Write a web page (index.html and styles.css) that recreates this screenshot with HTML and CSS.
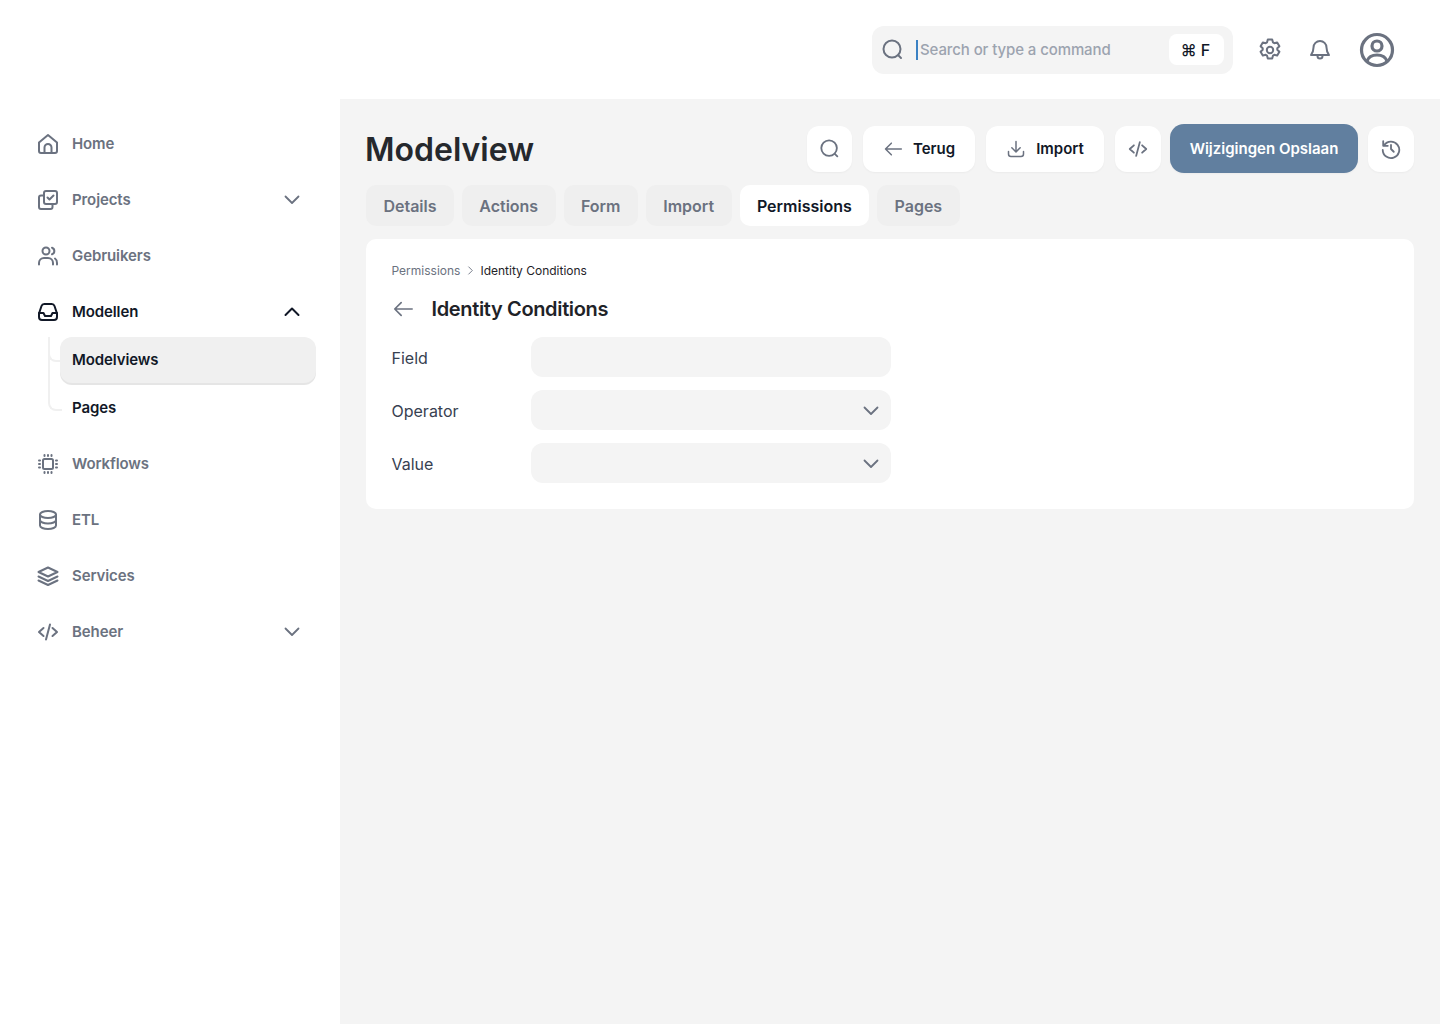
FILE: index.html
```html
<!DOCTYPE html>
<html lang="nl">
<head>
    <meta charset="UTF-8">
    <meta name="viewport" content="width=device-width, initial-scale=1.0">
    <title>Modelview</title>
    <link rel="stylesheet" href="styles.css">
</head>
<body>

    <!-- Topbar -->
    <header class="topbar">
        <div class="search">
            <svg class="icon-search" viewBox="0 0 24 24"><circle cx="11" cy="11" r="8.5"/><path d="M17.5 17.500 20 20"/></svg>
            <span class="caret"></span>
            <span class="search-text">Search or type a command</span>
            <span class="kbd">⌘ F</span>
        </div>
        <svg class="top-icon gear" viewBox="0 0 24 24"><path d="M9.800 1.500h4.400l.8 2.900 1.300.8 2.900-.8 2.200 3.800-2.100 2.100v1.400l2.100 2.100-2.200 3.800-2.900-.8-1.300.8-.8 2.900H9.800l-.8-2.900-1.300-.8-2.900.8-2.200-3.800 2.100-2.100v-1.400L2.600 8.200l2.200-3.800 2.900.8 1.300-.8z"/><circle cx="12" cy="12" r="3.200"/></svg>
        <svg class="top-icon bell" viewBox="0 0 24 24"><path d="M5.500 9.500a6.500 6.500 0 0 1 13 0c0 3.500 1 5.500 2.500 7.500H3c1.500-2 2.500-4 2.500-7.500z"/><path d="M9.500 17v1a2.500 2.500 0 0 0 5 0v-1"/></svg>
        <svg class="avatar" viewBox="0 0 36 36"><circle cx="18" cy="18" r="15.500"/><circle cx="18" cy="14" r="5"/><path d="M8 29c1.500-4 5-6 10-6s8.500 2 10 6"/></svg>
    </header>

    <div class="layout">
        <!-- Sidebar -->
        <nav class="sidebar">
            <a class="nav-item">
                <svg class="nav-icon" viewBox="0 0 24 24"><path d="M3 10.500 12 3l9 7.500V19a2 2 0 0 1-2 2H5a2 2 0 0 1-2-2z"/><path d="M8.500 21v-5.500a3.500 3.500 0 0 1 7 0V21"/></svg>
                Home
            </a>
            <a class="nav-item">
                <svg class="nav-icon" viewBox="0 0 24 24"><rect x="8" y="3" width="13" height="13" rx="2"/><path d="M8 7.500H5a2 2 0 0 0-2 2V19a2 2 0 0 0 2 2h9.500a2 2 0 0 0 2-2v-3"/><path d="m11.500 9.500 2 2 4-4"/></svg>
                Projects
                <svg class="chevron" viewBox="0 0 16 16"><path d="m1.500 4.500 6.500 6.500 6.500-6.500"/></svg>
            </a>
            <a class="nav-item">
                <svg class="nav-icon" viewBox="0 0 24 24"><circle cx="10" cy="7" r="3.500"/><path d="M3 20.500V19a5 5 0 0 1 5-5h4a5 5 0 0 1 5 5v1.500"/><path d="M16 3.700a3.500 3.500 0 0 1 0 6.600"/><path d="M19 14.500a5 5 0 0 1 2 4.500v1.500"/></svg>
                Gebruikers
            </a>
            <a class="nav-item active">
                <svg class="nav-icon" viewBox="0 0 24 24"><path d="M3 13.500 5.500 6A3 3 0 0 1 8.300 4h7.400a3 3 0 0 1 2.800 2l2.500 7.500V17a3 3 0 0 1-3 3H6a3 3 0 0 1-3-3z"/><path d="M3 13h4.500l1.500 3h6l1.500-3H21"/></svg>
                Modellen
                <svg class="chevron" viewBox="0 0 16 16"><path d="m1.500 11 6.500-6.500 6.500 6.500"/></svg>
            </a>
            <div class="subnav">
                <a class="sub-item selected">Modelviews</a>
                <a class="sub-item">Pages</a>
            </div>
            <a class="nav-item">
                <svg class="nav-icon" viewBox="0 0 24 24"><rect x="7" y="7" width="10" height="10" rx="1.500"/><path d="M8.500 3v1M12 3v1M15.500 3v1M8.500 20v1M12 20v1M15.500 20v1M3 8.500h1M3 12h1M3 15.500h1M20 8.500h1M20 12h1M20 15.500h1"/></svg>
                Workflows
            </a>
            <a class="nav-item">
                <svg class="nav-icon" viewBox="0 0 24 24"><ellipse cx="12" cy="6.500" rx="8" ry="3.500"/><path d="M4 6.500v11c0 2 3.600 3.500 8 3.500s8-1.500 8-3.500v-11"/><path d="M4 12c0 2 3.600 3.500 8 3.500s8-1.500 8-3.500"/></svg>
                ETL
            </a>
            <a class="nav-item">
                <svg class="nav-icon" viewBox="0 0 24 24"><path d="M12 3.500 21.500 8 12 12.500 2.500 8z"/><path d="m2.500 12.500 9.500 4.500 9.500-4.500"/><path d="m2.500 16.500 9.500 4.500 9.500-4.500"/></svg>
                Services
            </a>
            <a class="nav-item">
                <svg class="nav-icon" viewBox="0 0 24 24"><path d="m7.500 8-4.500 4 4.500 4M16.500 8l4.500 4-4.500 4M14 4.500l-4 15"/></svg>
                Beheer
                <svg class="chevron" viewBox="0 0 16 16"><path d="m1.500 4.500 6.500 6.500 6.500-6.500"/></svg>
            </a>
        </nav>

        <!-- Content -->
        <main class="content">
            <div class="page-head">
                <h1>Modelview</h1>
                <div class="actions">
                    <button class="btn btn-icon btn-first"><svg viewBox="0 0 24 24"><circle cx="11" cy="11" r="8.500"/><path d="M17.500 17.500 20 20"/></svg></button>
                    <button class="btn btn-back"><svg viewBox="0 0 24 24"><path d="M22 12H3M10 5l-7 7 7 7"/></svg>Terug</button>
                    <button class="btn btn-import"><svg viewBox="0 0 24 24"><path d="M12 3v12M7 10.500l5 5 5-5M3 15v3a3 3 0 0 0 3 3h12a3 3 0 0 0 3-3v-3"/></svg>Import</button>
                    <button class="btn btn-icon"><svg viewBox="0 0 24 24"><path d="m7.500 8-4.500 4 4.500 4M16.500 8l4.500 4-4.500 4M14 4.500l-4 15"/></svg></button>
                    <button class="btn btn-primary">Wijzigingen Opslaan</button>
                    <button class="btn btn-icon"><svg viewBox="0 0 24 24"><path d="M4.500 8A9 9 0 1 1 3 13"/><path d="M3.500 3.500V8.500H8.500"/><path d="M12 7.500V12l3 3"/></svg></button>
                </div>
            </div>

            <div class="tabs">
                <a class="tab">Details</a>
                <a class="tab">Actions</a>
                <a class="tab">Form</a>
                <a class="tab">Import</a>
                <a class="tab current">Permissions</a>
                <a class="tab">Pages</a>
            </div>

            <section class="card">
                <div class="breadcrumb">
                    <span class="crumb-parent">Permissions</span>
                    <svg viewBox="0 0 10 10"><path d="m3 1 4 4-4 4"/></svg>
                    <span>Identity Conditions</span>
                </div>
                <div class="card-title">
                    <svg viewBox="0 0 24 24"><path d="M22 12H3M10 5l-7 7 7 7"/></svg>
                    <h2>Identity Conditions</h2>
                </div>
                <div class="form-row">
                    <label>Field</label>
                    <div class="field"></div>
                </div>
                <div class="form-row">
                    <label>Operator</label>
                    <div class="field"><svg viewBox="0 0 16 16"><path d="m1.500 4.500 6.500 6.500 6.500-6.500"/></svg></div>
                </div>
                <div class="form-row">
                    <label>Value</label>
                    <div class="field"><svg viewBox="0 0 16 16"><path d="m1.500 4.500 6.500 6.500 6.500-6.500"/></svg></div>
                </div>
            </section>
        </main>
    </div>

</body>
</html>
```

FILE: styles.css
```css
* {
    box-sizing: border-box;
}
body {
    margin: 0;
    font-family: Inter, "Liberation Sans", sans-serif;
    color: #111827;
    background-color: #fff;
}
svg {
    fill: none;
    stroke: #6b7280;
    stroke-width: 1.8;
    stroke-linecap: round;
    stroke-linejoin: round;
    flex-shrink: 0;
}

/* topbar */
.topbar {
    height: 99px;
    display: flex;
    align-items: center;
    justify-content: flex-end;
    padding-right: 45px;
}
.search {
    width: 361px;
    height: 48px;
    margin-right: 25px;
    padding: 0 9px 0 9px;
    display: flex;
    align-items: center;
    background-color: #f4f4f4;
    border-radius: 12px;
}
.icon-search {
    width: 24px;
    height: 24px;
    stroke-width: 2;
}
.caret {
    width: 2px;
    height: 20px;
    margin-left: 11px;
    background-color: #3b82c4;
}
.search-text {
    margin-left: 2px;
    font-size: 15px;
    font-weight: 500;
    letter-spacing: -0.1px;
    color: #9ca3af;
}
.kbd {
    margin-left: auto;
    width: 55px;
    height: 31px;
    padding-right: 2px;
    display: flex;
    align-items: center;
    justify-content: center;
    background-color: #fff;
    border-radius: 8px;
    font-size: 16px;
    font-weight: 500;
    color: #111827;
}
.top-icon {
    width: 24px;
    height: 24px;
    stroke-width: 2;
}
.gear {
    margin-right: 26px;
}
.avatar {
    width: 36px;
    height: 36px;
    margin-left: 27px;
    stroke-width: 3.2;
}

/* sidebar */
.layout {
    display: flex;
    min-height: 925px;
}
.sidebar {
    width: 340px;
    flex-shrink: 0;
    padding: 17px 24px 0 36px;
}
.nav-item {
    height: 56px;
    padding-bottom: 1px;
    display: flex;
    align-items: center;
    font-size: 15px;
    font-weight: 600;
    letter-spacing: -0.1px;
    color: #6b7280;
}
.nav-icon {
    width: 24px;
    height: 24px;
    margin-right: 12px;
    stroke-width: 2;
}
.chevron {
    width: 16px;
    height: 16px;
    margin-left: auto;
    transform: translateX(-16px);
    stroke-width: 1.8;
}
.active {
    color: #111827;
}
.active svg {
    stroke: #111827;
    stroke-width: 2;
}
.subnav {
    margin-top: -4px;
    margin-bottom: 4px;
    padding-left: 24px;
    position: relative;
}
.subnav::before {
    content: "";
    position: absolute;
    left: 12px;
    top: 0;
    width: 12px;
    height: 72px;
    border-left: 2px solid #f0f0f0;
    border-bottom: 2px solid #f0f0f0;
    border-bottom-left-radius: 8px;
}
.sub-item {
    height: 48px;
    display: flex;
    align-items: center;
    padding-left: 12px;
    padding-bottom: 1px;
    font-size: 15px;
    font-weight: 600;
    letter-spacing: -0.1px;
    color: #111827;
}
.selected {
    position: relative;
    background-color: #f0f0f0;
    border-radius: 12px;
    box-shadow: 0 2px 0 #e5e5e5;
    height: 46px;
    margin-top: 1px;
    margin-bottom: 1px;
}
.selected::before {
    content: "";
    position: absolute;
    left: -12px;
    top: 11px;
    width: 12px;
    height: 12px;
    border-left: 2px solid #f0f0f0;
    border-bottom: 2px solid #f0f0f0;
    border-bottom-left-radius: 8px;
}

/* main */
.content {
    flex: 1;
    padding: 25px 26px 26px;
    background-color: #f4f4f4;
}
.page-head {
    display: flex;
    align-items: center;
    justify-content: space-between;
    height: 49px;
}
h1 {
    margin: 2px 0 0 -1px;
    font-size: 32px;
    font-weight: 600;
    color: #25282d;
}
.actions {
    display: flex;
    align-items: center;
    gap: 11px;
}
.btn {
    height: 46px;
    display: flex;
    align-items: center;
    justify-content: center;
    gap: 10px;
    padding: 0;
    border: none;
    border-radius: 12px;
    background-color: #fff;
    box-shadow: 0 1px 2px rgba(0, 0, 0, 0.04);
    font-family: inherit;
    font-size: 15px;
    font-weight: 600;
    color: #111827;
}
.btn svg {
    width: 20px;
    height: 20px;
}
.btn-icon {
    width: 46px;
}
.btn-first {
    width: 45px;
}
.btn-icon svg {
    width: 22px;
    height: 22px;
    stroke-width: 2;
}
.btn-back {
    width: 112px;
}
.btn-import {
    width: 118px;
}
.btn-primary {
    width: 188px;
    height: 49px;
    margin: 0 -1px 0 -2px;
    background-color: #617f9f;
    color: #fff;
    border-radius: 14px;
}
.tabs {
    display: flex;
    gap: 8px;
    margin-top: 12px;
}
.tab {
    height: 41px;
    display: flex;
    align-items: center;
    padding: 0 17.4px;
    background-color: #efefef;
    border-radius: 10px;
    font-size: 16px;
    font-weight: 600;
    color: #6b7280;
}
.current {
    background-color: #fff;
    color: #111827;
}
.card {
    margin-top: 13px;
    padding: 22px 26px 26px 25.5px;
    background-color: #fff;
    border-radius: 10px;
}
.breadcrumb {
    display: flex;
    align-items: center;
    gap: 5.5px;
    height: 18px;
    font-size: 12px;
    color: #1f2328;
}
.breadcrumb svg {
    width: 9px;
    height: 9px;
    stroke-width: 1;
}
.crumb-parent {
    color: #6b7280;
}
.card-title {
    display: flex;
    align-items: center;
    gap: 18px;
    margin-top: 18px;
    height: 24px;
}
.card-title svg {
    width: 22px;
    height: 22px;
}
h2 {
    margin: 0;
    font-size: 20px;
    font-weight: 600;
    letter-spacing: -0.35px;
    color: #1f2328;
}
.form-row {
    display: flex;
    align-items: center;
    margin-top: 13px;
}
.card-title + .form-row {
    margin-top: 16px;
}
label {
    width: 139.5px;
    padding-top: 2px;
    font-size: 16px;
    color: #374151;
}
.field {
    width: 360px;
    height: 40px;
    display: flex;
    align-items: center;
    justify-content: flex-end;
    padding: 2px 12px 0 0;
    background-color: #f4f4f4;
    border-radius: 12px;
}
.field svg {
    width: 16px;
    height: 16px;
}
```
